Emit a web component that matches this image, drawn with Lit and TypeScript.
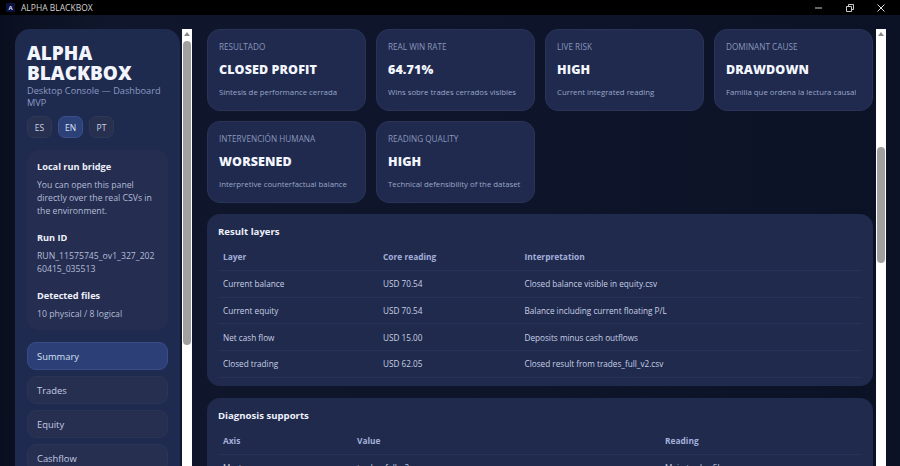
import { LitElement, html, css } from "lit";
import { customElement } from "lit/decorators.js";

const stats = [
  ["RESULTADO", "CLOSED PROFIT", "Síntesis de performance cerrada"],
  ["REAL WIN RATE", "64.71%", "Wins sobre trades cerrados visibles"],
  ["LIVE RISK", "HIGH", "Current integrated reading"],
  ["DOMINANT CAUSE", "DRAWDOWN", "Familia que ordena la lectura causal"],
  ["INTERVENCIÓN HUMANA", "WORSENED", "Interpretive counterfactual balance"],
  ["READING QUALITY", "HIGH", "Technical defensibility of the dataset"],
];
const layers = [
  ["Current balance", "USD 70.54", "Closed balance visible in equity.csv"],
  ["Current equity", "USD 70.54", "Balance including current floating P/L"],
  ["Net cash flow", "USD 15.00", "Deposits minus cash outflows"],
  ["Closed trading", "USD 62.05", "Closed result from trades_full_v2.csv"],
];

@customElement("app-root")
export class AppRoot extends LitElement {
  static styles = css`
    :host { display: block; width: 900px; height: 466px; overflow: hidden; background: #0c1324; font-family: "Open Sans", "Noto Sans", sans-serif; color: #e8edfa; }
    .titlebar { height: 15px; background: #000; display: flex; align-items: center; color: #d4d4d4; font-size: 8.5px; padding-left: 6px; gap: 6px; }
    .appicon { width: 9px; height: 9px; background: #0b1140; color: #dfe4ff; font-size: 6px; font-weight: 700; display: flex; align-items: center; justify-content: center; }
    .title { flex: 1; }
    .winbtns { display: flex; align-items: center; gap: 23px; padding-right: 15px; }
    .winbtns svg { display: block; }
    .body { height: 451px; display: flex; background: linear-gradient(90deg, #0a0f20 0%, #10172c 12%, #0e152a 60%, #0c1226 100%); overflow: hidden; padding: 14px 14px 0 15px; box-sizing: border-box; }
    .side { width: 165px; flex: none; border-radius: 15px 15px 0 0; background: linear-gradient(180deg, #1e2a4e, #1f2a50); padding: 14px 12px 0; box-sizing: border-box; height: 470px; }
    h1 { margin: 0; font-size: 19px; line-height: 20px; font-weight: 800; color: #f2f5fd; letter-spacing: 0; }
    .sub { margin-top: 2px; font-size: 9.2px; line-height: 11.5px; color: #8c9ac4; }
    .langs { display: flex; gap: 6px; margin-top: 8px; }
    .lang { width: 25px; height: 22px; border-radius: 7px; background: #27304f; border: 1px solid #2d3757; box-sizing: border-box; font-size: 8.5px; display: flex; align-items: center; justify-content: center; color: #c8d0e8; }
    .lang.on { background: #2c4178; border-color: #374f8c; color: #dfe6fb; }
    .bridge { margin-top: 12px; height: 180px; background: #252e50; border-radius: 12px; padding: 11px 10px; box-sizing: border-box; }
    .bridge b { display: block; font-size: 9.2px; line-height: 12px; font-weight: 700; color: #eef1fb; }
    .bridge p { margin: 6px 0 14px; font-size: 8.7px; line-height: 13px; color: #b4bcd8; word-break: break-all; }
    .bridge p.w { word-break: normal; }
    .nav { margin-top: 12px; display: flex; flex-direction: column; gap: 6px; }
    .nav div { height: 28px; border-radius: 9px; background: #272f50; border: 1px solid #2b3456; box-sizing: border-box; font-size: 9.4px; display: flex; align-items: center; padding-left: 9px; color: #c3cbe2; }
    .nav div.on { background: #2c3f76; border-color: #384c88; color: #d8e0f8; }
    .bar { width: 10px; flex: none; background: #fff; height: 452px; display: flex; flex-direction: column; align-items: center; }
    .bar.l { margin-left: 2px; }
    .bar.r { margin-left: 3px; }
    .arrow { height: 10px; flex: none; display: flex; align-items: center; justify-content: center; }
    .thumb { width: 8px; background: #a0a0a0; border-radius: 4px; flex: none; }
    .grow { flex: 1; }
    .main { width: 666px; flex: none; margin-left: 15px; }
    .stats { display: grid; grid-template-columns: repeat(4, 159px); gap: 10px; }
    .stat { height: 82px; border-radius: 13px; background: #1f2a4e; border: 1px solid #2a3456; box-sizing: border-box; padding: 11px; }
    .lab { font-size: 8.2px; line-height: 11px; color: #8a96bb; }
    .val { margin-top: 9px; font-size: 12.5px; line-height: 17px; font-weight: 800; color: #f3f6fd; letter-spacing: 0.1px; }
    .desc { margin-top: 9px; font-size: 7.8px; line-height: 11px; color: #9ba6c8; }
    .panel { margin-top: 11px; border-radius: 13px; background: #1f2a4c; padding: 11px; box-sizing: border-box; height: 172px; }
    .panel + .panel { height: 100px; margin-top: 12px; }
    h2 { margin: 0; font-size: 9.6px; line-height: 14px; font-weight: 700; color: #eef1fb; }
    .tr { display: grid; border-bottom: 1px solid #283256; font-size: 8.2px; align-items: center; height: 25.7px; color: #c9d0e6; padding-left: 5px; }
    .t1 .tr { grid-template-columns: 160px 141.5px 1fr; }
    .t2 .tr { grid-template-columns: 134px 308px 1fr; }
    .tr.h { color: #a3afdb; font-weight: 700; font-size: 8.4px; height: 27px; margin-top: 4px; }
  `;
  render() {
    return html`
      <div class="titlebar">
        <span class="appicon">A</span><span class="title">ALPHA BLACKBOX</span>
        <span class="winbtns">
          <svg width="8" height="8" viewBox="0 0 8 8"><path d="M0 4h7" stroke="#ccc"/></svg>
          <svg width="8" height="8" viewBox="0 0 8 8" fill="none" stroke="#ccc"><path d="M.5 2.5h5v5h-5zM2.5 2.5v-2h5v5h-2"/></svg>
          <svg width="8" height="8" viewBox="0 0 8 8" stroke="#ddd"><path d="M.5.5l7 7M7.5.5l-7 7"/></svg>
        </span>
      </div>
      <div class="body">
        <div class="side">
          <h1>ALPHA BLACKBOX</h1>
          <div class="sub">Desktop Console — Dashboard MVP</div>
          <div class="langs"><div class="lang">ES</div><div class="lang on">EN</div><div class="lang">PT</div></div>
          <div class="bridge">
            <b>Local run bridge</b>
            <p class="w">You can open this panel directly over the real CSVs in the environment.</p>
            <b>Run ID</b>
            <p>RUN_11575745_ov1_327_20260415_035513</p>
            <b>Detected files</b>
            <p class="w">10 physical / 8 logical</p>
          </div>
          <div class="nav">
            <div class="on">Summary</div><div>Trades</div><div>Equity</div><div>Cashflow</div>
          </div>
        </div>
        ${this.bar("l", 2, 304)}
        <div class="main">
          <div class="stats">
            ${stats.map((s) => html`<div class="stat"><div class="lab">${s[0]}</div><div class="val">${s[1]}</div><div class="desc">${s[2]}</div></div>`)}
          </div>
          <div class="panel t1">
            <h2>Result layers</h2>
            <div class="tr h"><span>Layer</span><span>Core reading</span><span>Interpretation</span></div>
            ${layers.map((r) => html`<div class="tr"><span>${r[0]}</span><span>${r[1]}</span><span>${r[2]}</span></div>`)}
          </div>
          <div class="panel t2">
            <h2>Diagnosis supports</h2>
            <div class="tr h"><span>Axis</span><span>Value</span><span>Reading</span></div>
            <div class="tr"><span>Master source</span><span>trades_full_v2.csv</span><span>Main trades file</span></div>
          </div>
        </div>
        ${this.bar("r", 108, 116)}
      </div>
    `;
  }
  bar(cls: string, top: number, h: number) {
    return html`<div class="bar ${cls}">
      <div class="arrow"><svg width="6" height="4" viewBox="0 0 6 4"><path d="M3 0l3 4H0z" fill="#888"/></svg></div>
      <div style="height:${top}px;flex:none"></div>
      <div class="thumb" style="height:${h}px"></div>
      <div class="grow"></div>
      <div class="arrow"><svg width="6" height="4" viewBox="0 0 6 4"><path d="M3 4L0 0h6z" fill="#888"/></svg></div>
    </div>`;
  }
}
